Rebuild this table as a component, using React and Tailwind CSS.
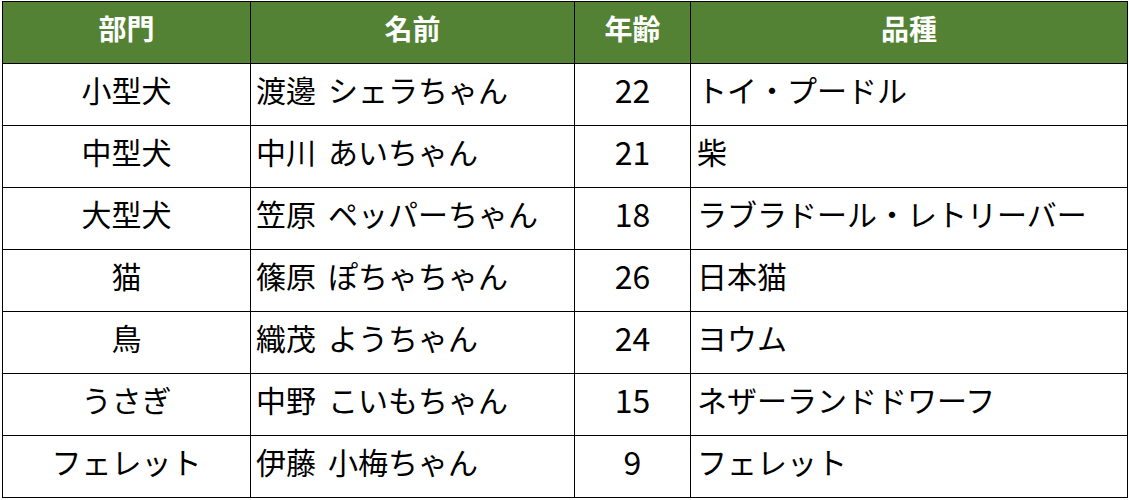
import React from "react";

const rows = [
  ["小型犬", "渡邊 シェラちゃん", "22", "トイ・プードル"],
  ["中型犬", "中川 あいちゃん", "21", "柴"],
  ["大型犬", "笠原 ペッパーちゃん", "18", "ラブラドール・レトリーバー"],
  ["猫", "篠原 ぽちゃちゃん", "26", "日本猫"],
  ["鳥", "織茂 ようちゃん", "24", "ヨウム"],
  ["うさぎ", "中野 こいもちゃん", "15", "ネザーランドドワーフ"],
  ["フェレット", "伊藤 小梅ちゃん", "9", "フェレット"],
];

const font = { fontFamily: '"Noto Sans CJK JP", "Noto Sans", sans-serif' };

export default function App() {
  return (
    <div className="bg-white w-[1129px] h-[500px] pl-[2px] pt-[1px]" style={font}>
      <table className="border-collapse border border-black table-fixed w-[1125px] text-black">
        <colgroup>
          <col className="w-[248px]" />
          <col className="w-[324px]" />
          <col className="w-[116px]" />
          <col className="w-[437px]" />
        </colgroup>
        <thead>
          <tr className="h-[62px] bg-[#548235] text-white">
            {["部門", "名前", "年齢", "品種"].map((h) => (
              <th key={h} className="border border-black text-[28px] font-bold text-center p-0 pb-[10px] leading-none">
                {h}
              </th>
            ))}
          </tr>
        </thead>
        <tbody>
          {rows.map((r, i) => (
            <tr key={i} className="h-[62px]">
              <td className="border border-black text-[30px] text-center p-0 pb-[11px] leading-none">{r[0]}</td>
              <td className="border border-black text-[30px] text-left p-0 pl-[5px] pb-[11px] leading-none whitespace-nowrap">
                {r[1].split(" ")[0]}
                <span className="inline-block w-[12px]"></span>
                {r[1].split(" ")[1]}
              </td>
              <td className="border border-black text-[32px] text-center p-0 pb-[11px] leading-none">{r[2]}</td>
              <td className="border border-black text-[30px] text-left p-0 pl-[6px] pb-[11px] leading-none whitespace-nowrap">{r[3]}</td>
            </tr>
          ))}
        </tbody>
      </table>
    </div>
  );
}
